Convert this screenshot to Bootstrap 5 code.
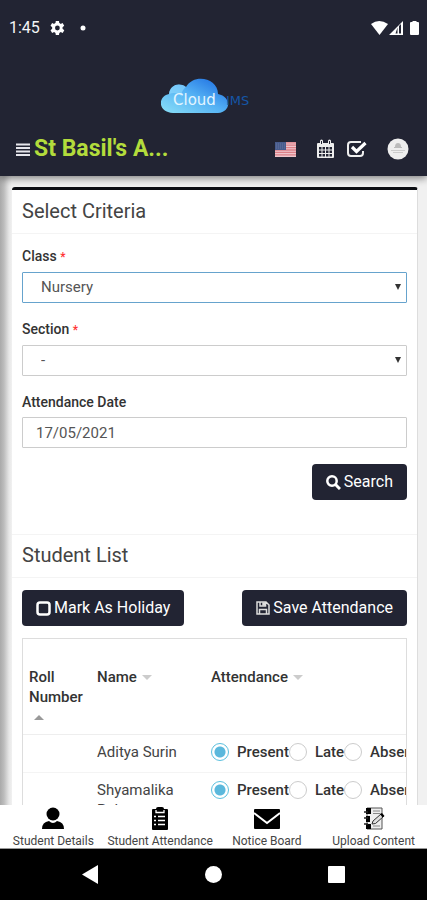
<!DOCTYPE html>
<html lang="en">
<head>
<meta charset="utf-8">
<meta name="viewport" content="width=device-width, initial-scale=1">
<title>Student Attendance</title>
<link href="https://cdn.jsdelivr.net/npm/bootstrap@5.3.0/dist/css/bootstrap.min.css" rel="stylesheet">
<style>
:root { --navy: #222433; }
body { font-family: Roboto, "Liberation Sans", sans-serif; font-size: 15px; line-height: 20px; color: #444; }
svg { display: block; flex: none; }
.app-top { background: var(--navy); box-shadow: 0 2px 8px rgba(0,0,0,.5); z-index: 2; }
.status-row { height: 55px; font-size: 16px; padding: 0 7px 0 9px; color: #f4f4f6; }
.logo-row { height: 67px; padding-top: 8px; }
.title-row { height: 54px; padding: 0 18px 0 16px; }
.school-name { font-size: 23px; line-height: 28px; color: #b3dc3c; }
.plain-btn { background: none; border: 0; padding: 0; }
.page-area { background: linear-gradient(90deg, #a9a9a9 0, #bdbdbd 4px, #e6e6e6 9px, #f1f1f1 12px); padding: 11px 9px 0 12px; min-height: 0; }
.panel { background: #fff; border-top: 3px solid #0d0f14; border-right: 1px solid #ddd; border-radius: 3px 3px 0 0; }
.panel-title { font-size: 20px; line-height: 24px; padding: 9px 11px 10px 10px; border-bottom: 1px solid #f4f4f4; color: #444; margin: 0; font-weight: 400; }
.panel-title.upper-line { border-top: 1px solid #f4f4f4; padding-top: 8px; }
.fields { padding: 12px 10px 34px; }
.field { margin-bottom: 16px; }
.field label { display: block; font-weight: 500; font-size: 14px; line-height: 20px; margin-bottom: 5px; color: #333; }
.field label span { color: #f33; font-size: 12px; }
.box-input { height: 31px; padding: 0 13px; font-size: 15px; color: #555; border: 1px solid #ccc; border-radius: 1px; box-shadow: none; }
select.box-input { padding: 0 18px; appearance: none; background: #fff; }
.box-input.chosen { border-color: #66a3cd; }
.select-holder::after { content: ""; position: absolute; right: 6px; top: 12px; border: 3px solid transparent; border-top: 6px solid #333; border-bottom: 0; }
.act-btn { background: var(--navy); color: #fff; font-size: 16px; line-height: 24px; padding: 6px 14px; border: 0; border-radius: 4px; font-weight: 400; gap: 3px; }
.act-btn:hover { background: #34374d; color: #fff; }
.list-area { padding: 12px 10px 0; }
.list-box { border: 1px solid #ddd; overflow: hidden; margin-top: 12px; }
.list-table { width: 450px; table-layout: fixed; margin: 0; color: #444; }
.list-table th { padding: 28px 6px 7px; font-weight: 500; color: #333; border-bottom: 1px solid #eee; vertical-align: top; line-height: 20px; }
.list-table td { padding: 7px 6px 10px; border-bottom: 1px solid #f4f4f4; vertical-align: top; }
.list-table td:nth-child(2) { padding-right: 24px; }
.roll-col { width: 68px; }
.name-col { width: 114px; }
.sort-mark { display: inline-block; border: 5px solid transparent; border-top-color: #ccc; border-bottom: 0; margin-left: 1px; vertical-align: 2px; }
.sort-mark.up { border: 5px solid transparent; border-top: 0; border-bottom-color: #999; margin-left: 5px; }
.mark-choice { font-weight: 500; color: #333; gap: 8px; line-height: 20px; }
.mark-choice input { appearance: none; width: 18px; height: 18px; margin: 0; border: 1px solid #ccc; border-radius: 50%; background: #fff; flex: none; }
.mark-choice input:checked { border-color: #5bc0de; background: radial-gradient(circle, #5bb8dc 5px, #fff 6px); }
.tab-row { height: 44px; border-bottom: 1px solid #999; z-index: 2; }
.tab-row a { flex: 1 1 0; color: #444; font-size: 12px; line-height: 14px; text-decoration: none; padding-top: 2px; white-space: nowrap; }
.system-row { height: 51px; padding: 0 82px; }
</style>
</head>
<body class="vh-100 d-flex flex-column overflow-hidden">
<header class="app-top position-relative flex-shrink-0">
  <div class="status-row d-flex align-items-center">
    <span>1:45</span>
    <svg class="ms-2 me-auto" width="40" height="18" viewBox="0 0 40 18" fill="#fff"><path fill-rule="evenodd" transform="translate(-1 -.6) scale(.8)" d="M19.400 13a7.500 7.500 0 0 0 0-2l2.100-1.700-2-3.400-2.500 1a7.500 7.500 0 0 0-1.700-1L15 3.200h-4l-.4 2.700a7.500 7.500 0 0 0-1.700 1l-2.500-1-2 3.400L6.500 11a7.500 7.500 0 0 0 0 2l-2.100 1.700 2 3.400 2.500-1a7.500 7.500 0 0 0 1.700 1l.4 2.700h4l.4-2.700a7.500 7.500 0 0 0 1.700-1l2.500 1 2-3.400zM13 15a3 3 0 1 1 0-6 3 3 0 0 1 0 6z"/><circle cx="35" cy="9" r="2.500"/></svg>
    <svg width="50" height="16" viewBox="0 0 50 16" fill="#fff"><path d="M1 4Q9-2 18 4L9.500 15z"/><path fill-rule="evenodd" d="M19 15 33 1v14zM25.500 13.500h2V7.500zM29 6v7.500h2V4z"/><path d="M40 3q0-1 1-1h1.500V1h4v1H48q1 0 1 1v11q0 1-1 1h-7q-1 0-1-1z"/></svg>
  </div>
  <div class="logo-row d-flex justify-content-center">
    <svg width="106" height="60" viewBox="0 0 106 60" role="img" aria-label="Cloud IMS">
      <defs><linearGradient id="sky" x1="0" y1="1" x2="1" y2="0"><stop offset="0" stop-color="#8be0f7"/><stop offset=".5" stop-color="#54b1f4"/><stop offset="1" stop-color="#1766df"/></linearGradient></defs>
      <path fill="url(#sky)" d="M12 50C-4 49-3 33 8 31c1-9 10-12 17-7 8-14 32-9 32 7 14 3 13 18 0 19z"/>
      <path fill="#9be2ff" opacity=".5" d="M8 31c1-9 10-12 17-7-4 3-5 7-4 10-3-4-8-5-13-3z"/>
      <text x="12" y="42" font-family="DejaVu Sans, sans-serif" font-size="15" fill="#e3f5ff">Cloud</text>
      <text x="65" y="42" font-family="DejaVu Sans, sans-serif" font-size="13" fill="#1556a7">IMS</text>
    </svg>
  </div>
  <div class="title-row d-flex align-items-center">
    <button class="plain-btn" aria-label="Menu"><svg width="14" height="13" viewBox="0 0 14 13" stroke="#e6e6ec" stroke-width="2"><path d="M0 1.500h14M0 5h14M0 8.500h14M0 12h14"/></svg></button>
    <h1 class="school-name fw-bold m-0 ms-1 me-auto">St Basil's A...</h1>
    <button class="plain-btn" aria-label="Language"><svg width="21" height="15" viewBox="0 0 21 15"><path fill="#efc6cc" d="M0 0h21v15H0z"/><path stroke="#dc8088" stroke-width="1.300" d="M0 .8h21M0 3.200h21M0 5.600h21M0 8h21M0 10.400h21M0 12.800h21"/><path fill="#475b8c" d="M0 0h11v8H0z"/><path stroke="#66759f" stroke-dasharray="1 1" d="M1 2h9M1 4h9M1 6h9"/></svg></button>
    <button class="plain-btn ms-3" aria-label="Calendar"><svg class="ms-1" width="19" height="20" viewBox="0 0 19 20"><rect x="1" y="4" width="17" height="15" rx="1" fill="#eee"/><path fill="#222433" d="M3 8h2.500v2.500H3zm3.500 0H9v2.500H6.500zM10 8h2.500v2.500H10zm3.500 0H16v2.500h-2.500zM3 11.500h2.500V14H3zm3.500 0H9V14H6.500zm3.500 0h2.500V14H10zm3.500 0H16V14h-2.500zM3 15h2.500v2.500H3zm3.500 0H9v2.500H6.500zm3.500 0h2.500v2.500H10zm3.500 0H16v2.500h-2.500z"/><path stroke="#eee" stroke-width="3" stroke-linecap="round" d="M5.500 2v3M13.500 2v3"/><path stroke="#222433" d="M5.500 2v3M13.500 2v3"/></svg></button>
    <button class="plain-btn ms-2" aria-label="Tasks"><svg class="ms-1" width="20" height="18" viewBox="0 0 20 18" fill="none" stroke="#eee"><path stroke-width="2" d="M14 2H4Q1 2 1 5v8q0 3 3 3h9q3 0 3-3v-2"/><path stroke="#fff" stroke-width="3.200" d="m5 7 4.500 4.500L18.500 3"/></svg></button>
    <button class="plain-btn ms-3" aria-label="Account"><svg class="ms-1" width="22" height="22" viewBox="0 0 22 22"><circle cx="11" cy="11" r="10.500" fill="#eee"/><path fill="#bbb" d="M8 9q0-4 3-4t3 4zM7 9h8v1H7z"/><path stroke="#ccc" d="M4 12.500h14M6 14.500h10"/></svg></button>
  </div>
</header>

<main class="page-area flex-grow-1 overflow-hidden">
  <div class="panel">
    <h2 class="panel-title">Select Criteria</h2>
    <form class="fields">
      <div class="field">
        <label for="class-pick">Class <span>*</span></label>
        <div class="select-holder position-relative"><select id="class-pick" class="form-control box-input chosen"><option>Nursery</option></select></div>
      </div>
      <div class="field">
        <label for="section-pick">Section <span>*</span></label>
        <div class="select-holder position-relative"><select id="section-pick" class="form-control box-input"><option>-</option></select></div>
      </div>
      <div class="field">
        <label for="date-box">Attendance Date</label>
        <input id="date-box" type="text" class="form-control box-input" value="17/05/2021">
      </div>
      <div class="d-flex justify-content-end">
        <button type="button" class="btn act-btn d-flex align-items-center"><svg width="15" height="15" viewBox="0 0 15 15" fill="none" stroke="#fff" stroke-width="2.500"><circle cx="6" cy="6" r="4.700"/><path stroke-width="3" d="m9.500 9.500 4.500 4.500"/></svg>Search</button>
      </div>
    </form>
    <h2 class="panel-title upper-line">Student List</h2>
    <div class="list-area">
      <div class="d-flex justify-content-between">
        <button type="button" class="btn act-btn d-flex align-items-center"><svg width="15" height="15" viewBox="0 0 15 15" fill="none" stroke="#fff" stroke-width="2.500"><rect x="1.500" y="1.500" width="12" height="12" rx="2.500"/></svg>Mark As Holiday</button>
        <button type="button" class="btn act-btn d-flex align-items-center"><svg width="14" height="14" viewBox="0 0 14 14" fill="none" stroke="#ddd" stroke-width="1.500"><path d="M1 1h9l3 3v9H1zM3.500 13V8.500h7V13M4 1v4h5.500V1"/><path fill="#ddd" d="M7 2h1.500v2H7z"/></svg>Save Attendance</button>
      </div>
      <div class="list-box">
        <table class="list-table">
          <thead><tr><th class="roll-col">Roll Number <span class="sort-mark up"></span></th><th class="name-col">Name <span class="sort-mark"></span></th><th>Attendance <span class="sort-mark"></span></th></tr></thead>
          <tbody>
            <tr><td></td><td>Aditya Surin</td><td><div class="d-flex">
              <label class="mark-choice d-flex align-items-center"><input type="radio" name="s1" checked>Present</label>
              <label class="mark-choice d-flex align-items-center"><input type="radio" name="s1">Late</label>
              <label class="mark-choice d-flex align-items-center"><input type="radio" name="s1">Absent</label></div></td></tr>
            <tr><td></td><td>Shyamalika Pal</td><td><div class="d-flex">
              <label class="mark-choice d-flex align-items-center"><input type="radio" name="s2" checked>Present</label>
              <label class="mark-choice d-flex align-items-center"><input type="radio" name="s2">Late</label>
              <label class="mark-choice d-flex align-items-center"><input type="radio" name="s2">Absent</label></div></td></tr>
          </tbody>
        </table>
      </div>
    </div>
  </div>
</main>

<nav class="tab-row d-flex bg-white flex-shrink-0 position-relative">
  <a href="#" class="d-flex flex-column align-items-center justify-content-between"><svg width="24" height="23" viewBox="0 0 24 23"><circle cx="12" cy="7" r="6.500"/><path d="M1 22q0-7 7-8 4 4 8 0 7 1 7 8z"/></svg>Student Details</a>
  <a href="#" class="d-flex flex-column align-items-center justify-content-between"><svg width="18" height="24" viewBox="0 0 18 24"><rect x="1" y="2" width="16" height="21" rx="1"/><rect x="5" width="8" height="5" rx="2"/><path stroke="#fff" stroke-width="1.300" fill="none" d="M5 3v2.500h8V3M7 9.500h7M7 13.500h7M7 17.500h7M3 9.500h2M3 13.500h2M3 17.500h2"/></svg>Student Attendance</a>
  <a href="#" class="d-flex flex-column align-items-center justify-content-between"><svg width="26" height="23" viewBox="0 0 26 23"><rect y="2" width="26" height="20" rx="1"/><path stroke="#fff" stroke-width="2" fill="none" d="m0 6 13 10L26 6"/></svg>Notice Board</a>
  <a href="#" class="d-flex flex-column align-items-center justify-content-between"><svg width="22" height="23" viewBox="0 0 22 23"><path fill="#eee" stroke="#555" d="M4 1h15v21H4z"/><path d="M3 1h5v6H3zM3 9h4v6H3zM3 17h5v5H3z"/><path stroke="#222" stroke-width="1.500" d="M1 5h4M1 11h4M1 17h4"/><path stroke="#888" d="M10 4h7M10 6.500h7M10 19h7"/><path stroke="#333" fill="#ddd" d="m9 17 1-3 8-7 2.500 2.500-8 7z"/><path d="m17 7 2-1 2.500 3-2 1.500z"/></svg>Upload Content</a>
</nav>
<footer class="system-row bg-black d-flex align-items-center justify-content-between flex-shrink-0">
  <button class="plain-btn" aria-label="Back"><svg width="16" height="19" viewBox="0 0 16 19" fill="#fff"><path d="M0 9.500 16 0v19z"/></svg></button>
  <button class="plain-btn" aria-label="Home"><svg width="17" height="17" viewBox="0 0 17 17" fill="#fff"><circle cx="8.500" cy="8.500" r="8.500"/></svg></button>
  <button class="plain-btn" aria-label="Recent apps"><svg width="17" height="17" viewBox="0 0 17 17" fill="#fff"><rect width="17" height="17" rx="1"/></svg></button>
</footer>
<script src="https://cdn.jsdelivr.net/npm/bootstrap@5.3.0/dist/js/bootstrap.bundle.min.js"></script>
</body>
</html>
